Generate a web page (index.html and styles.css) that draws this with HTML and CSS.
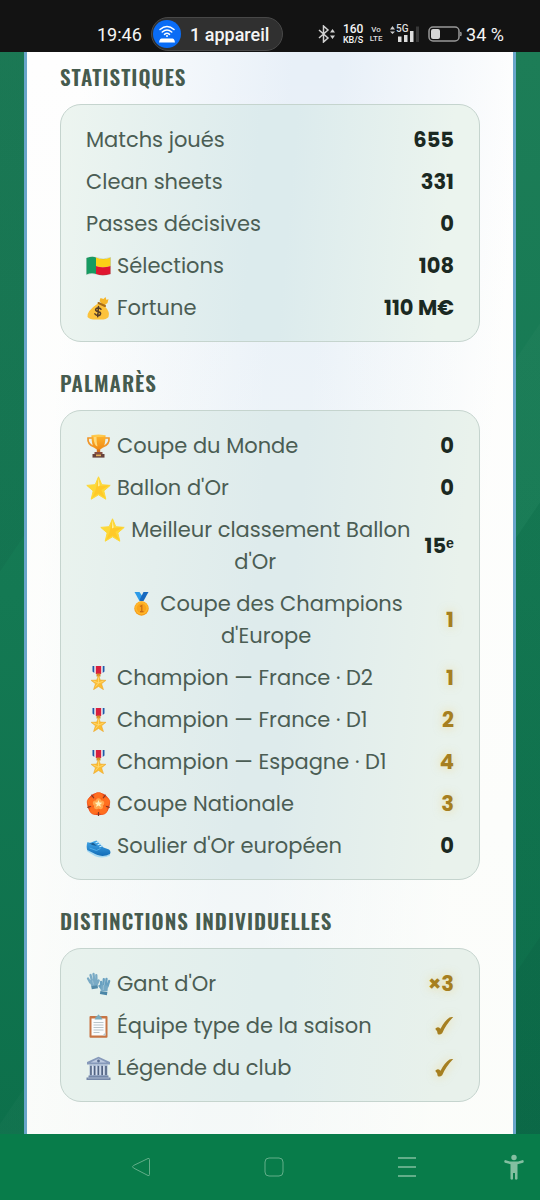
FILE: index.html
```html
<!DOCTYPE html>
<html lang="fr">
<head>
<meta charset="utf-8">
<meta name="viewport" content="width=device-width, initial-scale=1">
<title>Statistiques</title>
<link rel="stylesheet" href="styles.css">
</head>
<body>
<svg class="sprite" aria-hidden="true">
  <defs>
    <linearGradient id="gold" x1="0" y1="0" x2="0" y2="1"><stop offset="0" stop-color="#ffb52b"/><stop offset="1" stop-color="#f08b16"/></linearGradient>
    <linearGradient id="blue" x1="0" y1="0" x2="0" y2="1"><stop offset="0" stop-color="#43a7e8"/><stop offset="1" stop-color="#126db8"/></linearGradient>
  </defs>
  <symbol id="i-flag" viewBox="0 0 24 24">
    <path d="M0 4q6-2 9.500-.5V20Q5 18.500 0 20.500z" fill="#169b62"/>
    <path d="M9.500 3.500q7 3 14.500 0V12q-8 2.500-14.500 0z" fill="#fcd116"/>
    <path d="M9.500 12q6.500 2.500 14.500 0v8q-8 2.500-14.500 0z" fill="#e0162f"/>
    <path d="M0 4q6-2 9.500-.5 7 3 14.500 0V20q-8 2.500-14.500 0Q5 18.500 0 20.500z" fill="none" stroke="#5b7a5c" stroke-opacity=".3" stroke-width=".6"/>
  </symbol>
  <symbol id="i-bag" viewBox="0 0 24 24">
    <path d="M13 5l1-3 3 1 2-2 1 3 2-1-1 4-4 3z" fill="#f5b62b"/>
    <path d="M12 7l6 3q6 6 4 11-2 3-10 2.500-9 .5-11-2.500-1-6 11-14z" fill="#fcc23c"/>
    <path d="M12 7l6.500 3" stroke="#a86d18" stroke-width="2" stroke-linecap="round"/>
    <path d="M14.500 13.200q-1.500-1.500-3.500-1.100-2.300.6-1.800 2.200.4 1.200 2.500 1.400 2.400.3 2.400 1.900-.3 1.900-2.500 1.900-2 0-3.200-1.600M12 10.500l-.8 10.300" fill="none" stroke="#543c28" stroke-width="1.500" stroke-linecap="round"/>
  </symbol>
  <symbol id="i-cup" viewBox="0 0 24 24">
    <path d="M6 4H1.500q-.8 6.500 6.500 9M18 4h4.500q.8 6.500-6.500 9" fill="none" stroke="#f0962a" stroke-width="1.700"/>
    <path d="M10.300 14h3.400v5h-3.400z" fill="#d8741b"/>
    <path d="M5 1.500h14q0 10-3 12.500-4 3-8 0-3-2.500-3-12.500z" fill="url(#gold)"/>
    <path d="M7 3h3q0 6 1 9.500Q7.500 12 7 3z" fill="#ffd978"/>
    <ellipse cx="12" cy="1.800" rx="7.200" ry="1.200" fill="#ffca4e"/>
    <path d="M8 18h8v2.500H8z" fill="#874f42"/><path d="M6 20h12v3.600H6z" fill="#67423b"/><path d="M9.500 20.500h5v1.700h-5z" fill="#e5ad58"/>
  </symbol>
  <symbol id="i-star" viewBox="0 0 24 24">
    <path d="M12 .8l3.300 7.900 8.400.7-6.400 5.500 2 8.300-7.300-4.400-7.300 4.400 2-8.300L.3 9.400l8.400-.7z" fill="#fdd837" stroke="#fdd837" stroke-linejoin="round"/>
    <path d="M12 2l1.800 8 9-.7-8 4.700 3.800 8-6.600-4.500L6 21.500l3-7.200z" fill="#ffc929"/>
    <path d="M12 2l1.300 7.500-1.800 1z" fill="#fff3a3"/>
  </symbol>
  <symbol id="i-medal" viewBox="0 0 24 24">
    <path d="M5 0h5l4 6-2 3h-2z" fill="#2d9be8"/><path d="M19 0h-5l-4 8 1 1h3z" fill="#1769bf"/>
    <circle cx="12" cy="16.500" r="7.200" fill="#f59b18"/><circle cx="12" cy="16" r="6.500" fill="#ffb62b"/><circle cx="12" cy="16.300" r="4.800" fill="#f9a51d"/>
    <path d="M10.500 14.500l1.800-1v6M10.500 19.700h3.500" fill="none" stroke="#c96b16" stroke-width="1.200"/>
  </symbol>
  <symbol id="i-order" viewBox="0 0 24 24">
    <path d="M6 0h12v6l-2 2H8L6 6z" fill="#f1f3f5"/><path d="M6 0h1.800v7L6 5.500zM16.200 0H18v5.500L16.200 7z" fill="#215aa8"/><path d="M9.300 0h5.400v8H9.300z" fill="#d81f3e"/>
    <path d="M10 7.500h4v3h-4z" fill="#d58c2b"/>
    <path d="M12 9l1.800 5 5.700.3-4.400 3.500 1.900 5.900-5-3.200-5 3.200 1.900-5.900-4.400-3.500 5.700-.3z" fill="#fcbd32" stroke="#eaa226" stroke-width=".5" stroke-linejoin="round"/>
    <path d="M12 11.500V17l-3 3.500M12 17l5-2M12 17l-5-2" fill="none" stroke="#ffe184" stroke-width=".7"/>
  </symbol>
  <symbol id="i-rosette" viewBox="0 0 24 24">
    <circle cx="12" cy="12" r="11.300" fill="#e8481c"/>
    <g fill="#ff6f1f" stroke="#f4551c" stroke-width=".6"><circle cx="12" cy="5.300" r="4.900"/><circle cx="18.400" cy="10" r="4.900"/><circle cx="16" cy="17.500" r="4.900"/><circle cx="8" cy="17.500" r="4.900"/><circle cx="5.600" cy="10" r="4.900"/></g>
    <path d="M12 24v-4M.8 15.500l3.700-1.200M23.200 15.500l-3.700-1.200M5 2.800l2.400 3.400M19 2.800l-2.400 3.400" stroke="#7d3a22" stroke-width="1.100"/>
    <g fill="#ffa64d"><circle cx="12" cy="8.800" r="2.600"/><circle cx="15.100" cy="11" r="2.600"/><circle cx="13.900" cy="14.600" r="2.600"/><circle cx="10.100" cy="14.600" r="2.600"/><circle cx="8.900" cy="11" r="2.600"/></g>
    <path d="M12 8l1.100 2.500 2.700.2-2.100 1.700.7 2.700-2.400-1.500-2.400 1.500.7-2.700-2.100-1.700 2.700-.2z" fill="#fff2bd"/>
  </symbol>
  <symbol id="i-shoe" viewBox="0 0 24 24">
    <path d="M.5 15.500L9 20.500q7 3 14-.5l.7 1.500q-7 3.500-15 .8L.8 17.500z" fill="#a4d9f3"/>
    <path d="M1 8q3 1.500 6-.5l3-1 7 7 5.500 2q2.300 2 1 4.500-7 3.500-14 .5L.7 16Q-.5 12 1 8z" fill="url(#blue)"/>
    <path d="M2.500 9q2.500 1 4-.3l3.700 3Q6 12 2.500 9z" fill="#195b91"/>
    <path d="M9.500 8.800l3-1.300M11.500 10.800l3-1.400M13.300 12.700l3-1.200" stroke="#cceefd" stroke-width="1.100" stroke-linecap="round"/>
    <path d="M3 14l7 2.500 4-2" fill="none" stroke="#52b1ec" stroke-width=".9"/>
  </symbol>
  <symbol id="i-gloves" viewBox="0 0 24 24">
    <g fill="none" stroke="#79aac5" stroke-linecap="round">
      <path d="M1.500 6.500l2.200 4M4 3L5.500 9M7 2l.8 7M9.800 3.200L10 9M12.200 8.500L10.500 12" stroke-width="2.300"/>
      <path d="M5.500 9.500l1.500 4M8.500 9l.2 4.500" stroke-width="4.600"/>
    </g>
    <path d="M4.700 14.200l6.300-1 .5 3-6.200 1z" fill="#538aa8"/>
    <path d="M14.600 10l-.1 5M17.300 7.200L16.800 14M20 6.800L19.400 14M22.700 9L21 14.500M13 14l2.500 3" fill="none" stroke="#68a0c0" stroke-width="2.300" stroke-linecap="round"/>
    <path d="M16.700 13.500l-.3 5.500M19.300 13.500l-.6 5.500" stroke="#76a9c5" stroke-width="4.600"/><path d="M13.900 19l7 1-.5 3.200-7-1.300z" fill="#4b86a7"/>
    <path d="M6 8.500l1 4M17 13l-.3 5" stroke="#a6c8d9" stroke-width=".7"/>
  </symbol>
  <symbol id="i-board" viewBox="0 0 24 24">
    <rect x="3" y="2" width="18" height="21.700" rx="1" fill="#c77443"/><path d="M5 4.500h14v17H5z" fill="#fafcfd"/><path d="M16 21.500h3v-3z" fill="#b8c7cf"/>
    <path d="M9 4V2.500h1.500q1.500-4 3 0H15V4l1 1.500H8z" fill="#78acbf"/>
    <path d="M7 8.500h10M7 11h10M7 13.500h10M7 16h10M7 18.500h6" stroke="#aab6bd" stroke-width=".8"/>
  </symbol>
  <symbol id="i-museum" viewBox="0 0 24 24">
    <path d="M12 .8L23.500 6v2.500H.5V6z" fill="#8699ba"/><path d="M12 2.500L20 6.500H4z" fill="#bcc9df"/><circle cx="12" cy="5" r="1.400" fill="#586c90"/>
    <path d="M3 8.500h18v12H3z" fill="#a8b9d3"/><path d="M4.500 10v9M8.300 10v9M12 10v9M15.700 10v9M19.500 10v9" stroke="#526381" stroke-width="1.600"/>
    <path d="M6 9.500v10M9.800 9.500v10M13.600 9.500v10M17.300 9.500v10" stroke="#dce4f0" stroke-width="1.200"/>
    <path d="M2 19.500h20v2h2V24H0v-2.500h2z" fill="#7588a9"/><path d="M1.500 22h21" stroke="#b8c5da" stroke-width=".8"/>
  </symbol>
  <symbol id="i-check" viewBox="0 0 20 20">
    <path d="M1.800 12.200q2.800-2.400 4.700.6Q10.500 4.800 15.500 1.500q2-.9 3.700-.4Q12 8.500 8.200 17.200q-2.400 2.200-4.500.8-.2-3.500-2-4.500-.6-.7.100-1.300z" fill="currentColor"/>
  </symbol>
</svg>

<div class="screen">
  <header class="status">
    <time class="clock">19:46</time>
    <div class="device">
      <svg class="device-icon" viewBox="0 0 28 28" aria-hidden="true">
        <circle cx="14" cy="14" r="14" fill="#0a6cf5"/>
        <path d="M7 9.500q7-6 14 0M9.300 12q4.700-4 9.400 0M11.500 14.300q2.500-2 5 0" fill="none" stroke="#fff" stroke-width="1.600" stroke-linecap="round"/>
        <circle cx="14" cy="16" r="1" fill="#fff"/><path d="M8.500 18.500h11q1.500 0 2 2l.5 2H6l.5-2q.5-2 2-2z" fill="#fff"/>
      </svg>
      <span>1 appareil</span>
    </div>
    <div class="indicators">
      <svg class="bt" viewBox="0 0 18 18" aria-hidden="true"><path d="M1 5l9 8-4.500 4V1L10 5l-9 8" fill="none" stroke="#d2d2d2" stroke-width="1.500"/><path d="M12 7.500L14.500 4 17 7.500zM12 10.500h5L14.500 14z" fill="#d2d2d2"/></svg>
      <span class="rate"><b>160</b><small>KB/S</small></span>
      <span class="volte"><span>Vo</span><span>LTE</span></span>
      <span class="signal">
        <svg viewBox="0 0 30 18" aria-hidden="true"><path d="M0 4.500L2.500 1 5 4.500zM0 6.500h5L2.500 9z" fill="#ccc"/><path d="M8 11.500h3.500V17H8zM14 10h3.500v7H14zM20 6h3.500v11H20z" fill="#ddd"/><path d="M26 1.500h3V17h-3z" fill="#383838"/></svg>
        <span class="gen">5G</span>
      </span>
      <svg class="battery" viewBox="0 0 34 16" aria-hidden="true"><rect x="1" y="1" width="30" height="14" rx="4" fill="none" stroke="#999" stroke-width="1.500"/><rect x="3" y="3" width="9" height="10" rx="2" fill="#d4d4d4"/><path d="M32.500 6q1 2 0 4" fill="none" stroke="#999" stroke-width="1.500"/></svg>
      <span class="percent">34 %</span>
    </div>
  </header>

  <div class="pitch">
    <main class="panel">
      <section>
        <h2>Statistiques</h2>
        <dl class="card">
          <div class="row"><dt>Matchs joués</dt><dd>655</dd></div>
          <div class="row"><dt>Clean sheets</dt><dd>331</dd></div>
          <div class="row"><dt>Passes décisives</dt><dd>0</dd></div>
          <div class="row"><dt><svg class="emoji"><use href="#i-flag"/></svg>Sélections</dt><dd>108</dd></div>
          <div class="row"><dt><svg class="emoji"><use href="#i-bag"/></svg>Fortune</dt><dd>110 M€</dd></div>
        </dl>
      </section>
      <section>
        <h2>Palmarès</h2>
        <dl class="card">
          <div class="row"><dt><svg class="emoji"><use href="#i-cup"/></svg>Coupe du Monde</dt><dd>0</dd></div>
          <div class="row"><dt><svg class="emoji"><use href="#i-star"/></svg>Ballon d'Or</dt><dd>0</dd></div>
          <div class="row"><dt class="wide"><svg class="emoji"><use href="#i-star"/></svg>Meilleur classement Ballon<br>d'Or</dt><dd>15<span class="ordinal">ᵉ</span></dd></div>
          <div class="row"><dt class="wide"><svg class="emoji"><use href="#i-medal"/></svg>Coupe des Champions<br>d'Europe</dt><dd class="won">1</dd></div>
          <div class="row"><dt><svg class="emoji"><use href="#i-order"/></svg>Champion — France · D2</dt><dd class="won">1</dd></div>
          <div class="row"><dt><svg class="emoji"><use href="#i-order"/></svg>Champion — France · D1</dt><dd class="won">2</dd></div>
          <div class="row"><dt><svg class="emoji"><use href="#i-order"/></svg>Champion — Espagne · D1</dt><dd class="won">4</dd></div>
          <div class="row"><dt><svg class="emoji"><use href="#i-rosette"/></svg>Coupe Nationale</dt><dd class="won">3</dd></div>
          <div class="row"><dt><svg class="emoji"><use href="#i-shoe"/></svg>Soulier d'Or européen</dt><dd>0</dd></div>
        </dl>
      </section>
      <section>
        <h2>Distinctions individuelles</h2>
        <dl class="card">
          <div class="row"><dt><svg class="emoji"><use href="#i-gloves"/></svg>Gant d'Or</dt><dd class="won">×3</dd></div>
          <div class="row"><dt><svg class="emoji"><use href="#i-board"/></svg>Équipe type de la saison</dt><dd class="won"><svg class="check" role="img" aria-label="Oui"><use href="#i-check"/></svg></dd></div>
          <div class="row"><dt><svg class="emoji"><use href="#i-museum"/></svg>Légende du club</dt><dd class="won"><svg class="check" role="img" aria-label="Oui"><use href="#i-check"/></svg></dd></div>
        </dl>
      </section>
    </main>
  </div>

  <nav class="navbar">
    <button type="button" aria-label="Retour"><svg viewBox="0 0 20 20"><path d="M17 1.500L2.500 8.500q-2 1.200 0 2.500L17 18.500q1.500.5 1.500-1V2.500q0-1.500-1.500-1z"/></svg></button>
    <button type="button" aria-label="Accueil"><svg viewBox="0 0 20 20"><rect x="1" y="1" width="18" height="18" rx="4"/></svg></button>
    <button type="button" aria-label="Applications récentes"><svg class="bars" viewBox="0 0 20 20"><path d="M1 1h18M1 10h18M1 19h18"/></svg></button>
    <button type="button" class="access" aria-label="Accessibilité"><svg viewBox="0 0 20 26"><circle cx="10" cy="3.500" r="2.700"/><path d="M1 6l5 1.500h8L19 6q1.500 1.500 0 2.800l-5.500 1.400V25q-1.500 1.400-2.500 0v-6H9v6q-1 1.400-2.500 0V10.200L1 8.800Q-.5 7.500 1 6z"/></svg></button>
  </nav>
</div>
</body>
</html>
```
FILE: styles.css
```css
* { box-sizing: border-box; }

body {
  margin: 0;
  background: #087c4a;
  font-family: Poppins, Inter, sans-serif;
}

.sprite { position: absolute; width: 0; height: 0; }

.screen {
  display: flex;
  flex-direction: column;
  min-height: 100vh;
}

/* Status bar */
.status {
  display: flex;
  align-items: center;
  padding: 17px 36px 1px 97px;
  background: #131313;
  color: #f5f5f5;
  font-family: Roboto, sans-serif;
  font-size: 18px;
}

.clock { width: 54px; }

.device {
  display: flex;
  align-items: center;
  gap: 9px;
  height: 34px;
  padding: 0 13px 0 1px;
  border: 1px solid #484848;
  border-radius: 17px;
  background: #303030;
  font-weight: 500;
  white-space: nowrap;
}

.device-icon { width: 28px; height: 28px; }

.indicators {
  display: flex;
  align-items: center;
  margin-left: auto;
  white-space: nowrap;
}

.bt { width: 18px; height: 18px; margin-right: 6px; }

.rate,
.volte {
  display: flex;
  flex-direction: column;
  align-items: center;
  font-weight: 500;
}

.rate { width: 22px; margin-right: 6px; line-height: 12px; }
.rate b { font-size: 12px; font-weight: 500; }
.rate small { font-size: 9px; line-height: 10px; }

.volte {
  width: 12px;
  margin-right: 8px;
  color: #ddd;
  font-size: 8px;
  line-height: 9px;
}

.signal { position: relative; margin-right: 8px; }
.signal svg { display: block; width: 30px; height: 18px; }
.gen { position: absolute; top: -1px; left: 6px; font-size: 10px; font-weight: 500; line-height: 10px; color: #ddd; }

.battery { width: 34px; height: 16px; margin-right: 4px; }

/* Content */
.pitch {
  display: flex;
  flex: 1;
  padding: 0 24px;
  background:
    linear-gradient(124deg, rgba(0, 40, 40, 0.06) 290px, transparent 291px 599px, rgba(255, 255, 255, 0.02) 600px 699px, rgba(0, 60, 40, 0.06) 700px 942px, rgba(0, 50, 40, 0.12) 943px),
    linear-gradient(180deg, #1d7d57 0%, #147953 50%, #0d704b 100%);
}

.panel {
  flex: 1;
  padding: 13px 33px 31px;
  border: solid #69a5ca;
  border-width: 0 3px;
  background:
    linear-gradient(180deg, rgba(250, 252, 248, 0), rgba(250, 252, 248, 0.7)),
    linear-gradient(95deg, #fefefe 10%, #e8f0f8 46%, #e8f0f8 54%, #fefefe 86%);
}

section + section { margin-top: 29px; }

h2 {
  margin: 0 0 15px;
  color: #465b4e;
  font-family: Oswald, "Liberation Sans Narrow", Roboto, sans-serif;
  font-size: 21px;
  font-weight: 600;
  line-height: 24px;
  letter-spacing: 1px;
  text-transform: uppercase;
}

.card {
  display: flex;
  flex-direction: column;
  gap: 10px;
  margin: 0;
  padding: 19px 25px 17px;
  border: 1px solid #c5d4ce;
  border-radius: 21px;
  background: linear-gradient(95deg, #edf5f0, #dcebed 46%, #dcebed 54%, #ebf4ee 90%);
}

section + section .card {
  background: linear-gradient(95deg, #eaf3ee, #deebec 46%, #deebec 54%, #e9f2ec 90%);
}

section:last-child .card {
  background: linear-gradient(95deg, #e8f2ed, #e1eeed 46%, #e1eeed 54%, #e8f1eb 90%);
}

.row {
  display: flex;
  align-items: center;
  justify-content: space-between;
  font-size: 21px;
  line-height: 32px;
}

dt { color: #4b5d54; text-align: center; }
.wide { flex: 1; }

dd {
  margin: 0;
  color: #1b2922;
  font-weight: 700;
  white-space: nowrap;
}

.ordinal { font-family: Roboto, sans-serif; }

.won { color: #a67f20; text-shadow: 0 0 10px rgba(240, 200, 80, 0.5); }

.emoji {
  width: 25px;
  height: 24px;
  margin-right: 6px;
  vertical-align: -5px;
}

.check {
  display: block;
  width: 20px;
  height: 20px;
  filter: drop-shadow(0 0 5px rgba(240, 200, 80, 0.5));
}

/* Navigation bar */
.navbar {
  display: grid;
  grid-template-columns: 2fr 2fr 2fr 1fr;
  height: 66px;
  padding-left: 74px;
  background: #087c4a;
}

.navbar button {
  display: flex;
  align-items: center;
  justify-content: center;
  padding: 0;
  border: 0;
  background: none;
}

.navbar svg {
  width: 20px;
  height: 20px;
  fill: none;
  stroke: #62ae89;
  stroke-width: 1;
}

.navbar .bars { stroke-width: 2; }

.navbar .access { justify-content: flex-end; padding-right: 16px; }
.navbar .access svg { height: 26px; fill: #84bfa1; stroke: none; }
```
